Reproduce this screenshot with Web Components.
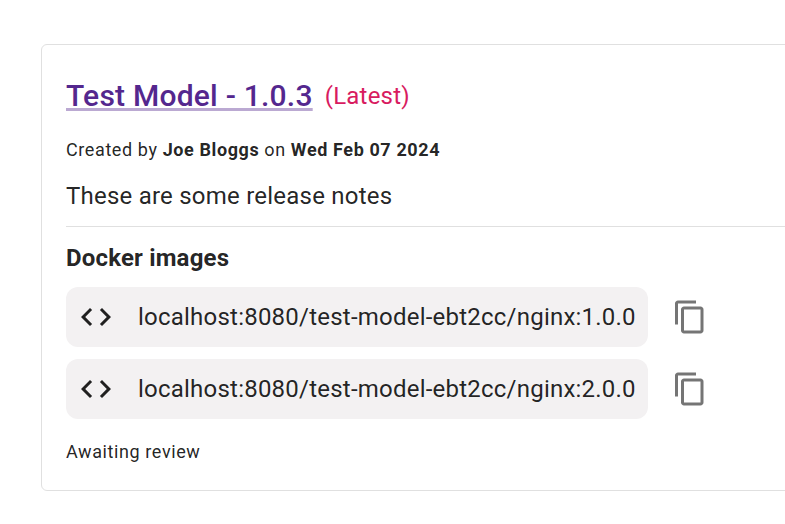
<!DOCTYPE html>
<html lang="en"><head><meta charset="utf-8"><title>Test Model</title>
<style>
body{margin:0;background:#fff;overflow:hidden;font-family:Roboto,sans-serif;color:rgba(0,0,0,.87)}
</style></head><body>
<release-card>
  <release-title slot="title" label="Test Model - 1.0.3"></release-title>
  <docker-image slot="images">localhost:8080/test-model-ebt2cc/nginx:1.0.0</docker-image>
  <docker-image slot="images">localhost:8080/test-model-ebt2cc/nginx:2.0.0</docker-image>
</release-card>
<script>
class ReleaseTitle extends HTMLElement{
  constructor(){
    super();
    this.attachShadow({mode:'open'}).innerHTML=`<style>
    :host{display:flex;align-items:center;gap:12px;height:48px}
    a{color:#54278e;font-size:30px;font-weight:500;line-height:48px;letter-spacing:.225px;text-decoration:underline;text-decoration-color:rgba(84,39,142,.4);white-space:nowrap}
    span{color:#d81b60;font-size:24px;line-height:36px;letter-spacing:.225px;white-space:nowrap}
    </style><a></a><span>(Latest)</span>`;
  }
  connectedCallback(){this.shadowRoot.querySelector('a').textContent=this.getAttribute('label');}
}
customElements.define('release-title',ReleaseTitle);

class DockerImage extends HTMLElement{
  constructor(){
    super();
    this.attachShadow({mode:'open'}).innerHTML=`<style>
    :host{display:flex;align-items:center;gap:24px;height:60px}
    .chip{box-sizing:border-box;display:flex;align-items:center;gap:24px;width:582px;height:60px;padding-left:12px;border-radius:12px;background:#f3f1f2}
    .text{font-size:24px;line-height:36px;letter-spacing:.225px;white-space:nowrap}
    svg{width:36px;height:36px;flex:none;display:block}
    </style><div class="chip"><svg viewBox="0 0 24 24" fill="currentColor"><path d="M9.4 16.6 4.8 12l4.6-4.6L8 6l-6 6 6 6zm5.2 0 4.6-4.6-4.6-4.6L16 6l6 6-6 6z"/></svg><span class="text"><slot></slot></span></div>
    <svg viewBox="0 0 24 24" fill="rgba(0,0,0,.54)"><path d="M16 1H4c-1.1 0-2 .9-2 2v14h2V3h12zm3 4H8c-1.1 0-2 .9-2 2v14c0 1.1.9 2 2 2h11c1.1 0 2-.9 2-2V7c0-1.1-.9-2-2-2m0 16H8V7h11z"/></svg>`;
  }
}
customElements.define('docker-image',DockerImage);

class ReleaseCard extends HTMLElement{
  constructor(){
    super();
    this.attachShadow({mode:'open'}).innerHTML=`<style>
    :host{display:block;box-sizing:border-box;margin:44px 0 0 41px;width:800px;height:447px;border:1px solid #e0e0e0;border-radius:6px;padding:27px 24px 0}
    p,h2,hr{margin:0}
    .meta{font-size:18px;line-height:30px;letter-spacing:.6px;margin-top:15px}
    b{font-weight:700}
    .notes{font-size:24px;line-height:36px;letter-spacing:.225px;margin-top:13px}
    hr{border:0;border-top:1px solid #e0e0e0;margin-top:12px}
    h2{font-size:24px;line-height:36px;letter-spacing:.17px;font-weight:700;margin-top:13px}
    .images{display:grid;gap:12px;margin-top:11px}
    .review{font-size:18px;line-height:30px;letter-spacing:.6px;margin-top:18px}
    </style>
    <slot name="title"></slot>
    <p class="meta">Created by <b>Joe Bloggs</b> on <b>Wed Feb 07 2024</b></p>
    <p class="notes">These are some release notes</p>
    <hr>
    <h2>Docker images</h2>
    <div class="images"><slot name="images"></slot></div>
    <p class="review">Awaiting review</p>`;
  }
}
customElements.define('release-card',ReleaseCard);
</script></body></html>
